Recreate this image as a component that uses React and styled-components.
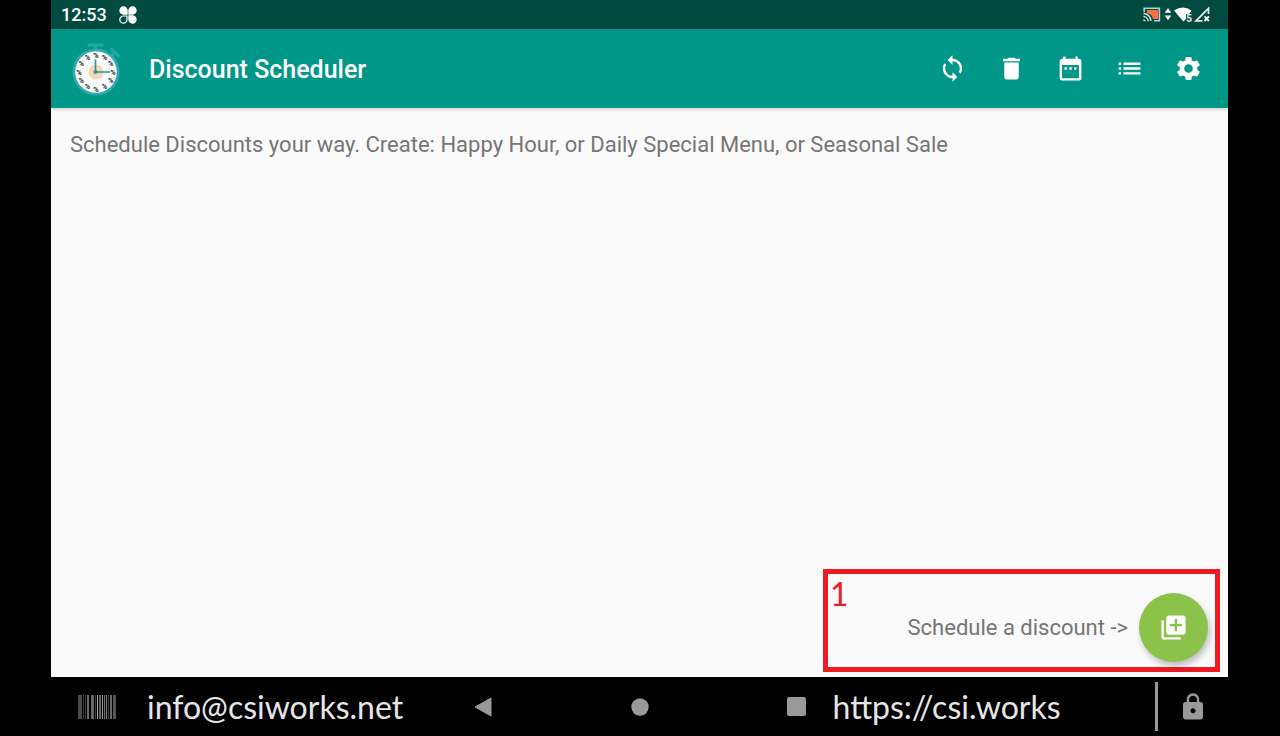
import React from "react";
import styled, { createGlobalStyle } from "styled-components";
import {
  MdDateRange,
  MdDelete,
  MdLibraryAdd,
  MdList,
  MdLock,
  MdSettings,
  MdSync,
} from "react-icons/md";

const actions = [
  { label: "Sync", Icon: MdSync },
  { label: "Delete", Icon: MdDelete },
  { label: "Calendar", Icon: MdDateRange },
  { label: "List", Icon: MdList },
  { label: "Settings", Icon: MdSettings },
];

// hour marks around the dial of the app logo
const hours = Array.from({ length: 12 }, (_, i) => i * 30);

// x, width and shade of each barcode stripe
const stripes = [
  [0, 4, "#4a4a4a"],
  [5, 1, "#333"],
  [7, 1, "#3c3c3c"],
  [9, 2, "#6a6a6a"],
  [13, 3, "#666"],
  [17, 1, "#444"],
  [19, 1, "#aaa"],
  [21, 2, "#666"],
  [24, 1, "#999"],
  [26, 1, "#777"],
  [28, 1, "#888"],
  [30, 1, "#444"],
  [32, 2, "#6a6a6a"],
  [35, 3, "#555"],
];

const Logo = () => (
  <svg width="52" height="54" viewBox="0 0 52 54" aria-hidden="true">
    <path d="M19 3h13M25.500 3v6M41.500 7l7 7M45 10.500l-4 4" stroke="#1fa5a3" strokeWidth="3.4" strokeLinecap="round" fill="none" />
    <circle cx="26" cy="30" r="23.6" fill="#30a8ae" />
    <circle cx="26" cy="30" r="20.8" fill="#fbfdfd" />
    <circle cx="26" cy="30" r="7.6" fill="#fbd5b5" />
    {hours.map((deg) => (
      <text
        key={deg}
        x={26 + 17 * Math.sin((deg * Math.PI) / 180)}
        y={32.6 - 17 * Math.cos((deg * Math.PI) / 180)}
        textAnchor="middle"
        fontFamily="Roboto, sans-serif"
        fontSize="7.4"
        fontWeight="900"
        fill="#3c4648"
      >
        %
      </text>
    ))}
    <path d="M25.500 17.500V30H40" stroke="#1b9a98" strokeWidth="1.6" fill="none" />
    <circle cx="25.5" cy="30" r="2" fill="#1b9a98" />
  </svg>
);

const Clover = () => (
  <svg width="18" height="18" viewBox="0 0 18 18" fill="#fff" aria-hidden="true">
    <path d="M8.700 8.700H4.700a4.200 4.200 0 1 1 4-4z" />
    <path d="M9.300 8.700h4a4.200 4.200 0 1 0-4-4z" />
    <path d="M9.300 9.300h4a4.200 4.200 0 1 1-4 4z" />
    <path d="M8 10H4.600a3.600 3.600 0 1 0 3.400 3.600z" fill="none" stroke="#fff" strokeWidth="1.2" />
  </svg>
);

const StatusIcons = () => (
  <svg width="68" height="18" viewBox="0 0 68 18" aria-hidden="true">
    <path d="M4 4h11v9h-5Q9 8 4 7z" fill="#ff6e40" />
    <path d="M1.200 6V2.200h15.200v12.600H11" fill="none" stroke="#b9d2cf" strokeWidth="1.600" />
    <path d="M.5 7.600a7.400 7.400 0 0 1 7.400 7.400M.5 10.600a4.600 4.600 0 0 1 4.600 4.600" fill="none" stroke="#d6e4e2" strokeWidth="1.500" />
    <path d="M.5 13.200a2 2 0 0 1 2 2h-2z" fill="#e4efed" />
    <path d="M25 2l3.200 4.800h-6.400zM25 14.200l3.200-4.800h-6.400z" fill="#fff" />
    <path d="M31 4.600q9-6 17.600 0L46 8h-3v5l-2.600 2.600z" fill="#fff" />
    <text x="43.2" y="16" fontFamily="Roboto, sans-serif" fontSize="10" fontWeight="700" fill="#e4efed">
      5
    </text>
    <path d="M65.500 8V2.400L53 14.800h6.500" fill="none" stroke="#e4efed" strokeWidth="1.700" />
    <path d="M61.500 10.400l4.400 4.600m0-4.600l-4.400 4.600" stroke="#f4faf9" strokeWidth="1.900" />
  </svg>
);

const Barcode = () => (
  <svg width="38" height="24" viewBox="0 0 38 24" shapeRendering="crispEdges" aria-hidden="true">
    {stripes.map(([x, width, fill]) => (
      <rect key={x} x={x} y="0" width={width} height="24" fill={fill} />
    ))}
  </svg>
);

const App = () => {
  return (
    <>
      <GlobalStyle />
      <Screen>
        <StatusBar>
          <Time>12:53</Time>
          <Clover />
          <Spacer />
          <StatusIcons />
        </StatusBar>
        <AppBar>
          <Logo />
          <Title>Discount Scheduler</Title>
          <Spacer />
          {actions.map(({ label, Icon }) => (
            <ActionButton key={label} type="button" aria-label={label}>
              <Icon size={29} />
            </ActionButton>
          ))}
        </AppBar>
        <Content>
          <Text>
            Schedule Discounts your way. Create: Happy Hour, or Daily Special
            Menu, or Seasonal Sale
          </Text>
          <Callout>
            <Step>1</Step>
            <Text>Schedule a discount -&gt;</Text>
            <AddButton type="button" aria-label="Schedule a discount">
              <MdLibraryAdd size={29} />
            </AddButton>
          </Callout>
        </Content>
        <NavBar>
          <NavSide>
            <NavButton type="button" aria-label="Scan">
              <Barcode />
            </NavButton>
            <ContactLink href="mailto:info@csiworks.net">
              info@csiworks.net
            </ContactLink>
            <Spacer />
            <NavButton type="button" aria-label="Back">
              <svg width="18" height="20" viewBox="0 0 18 20">
                <path d="M1 10L17 1v18z" fill="#999" stroke="#999" strokeLinejoin="round" />
              </svg>
            </NavButton>
          </NavSide>
          <NavButton type="button" aria-label="Home">
            <svg width="18" height="18" viewBox="0 0 18 18">
              <circle cx="9" cy="9" r="8.7" fill="#999" />
            </svg>
          </NavButton>
          <NavSide $end>
            <NavButton type="button" aria-label="Recent apps">
              <svg width="19" height="19" viewBox="0 0 19 19">
                <rect width="19" height="19" rx="2" fill="#999" />
              </svg>
            </NavButton>
            <ContactLink href="https://csi.works">https://csi.works</ContactLink>
            <Spacer />
            <Divider />
            <NavButton type="button" aria-label="Lock">
              <MdLock size={30} />
            </NavButton>
          </NavSide>
        </NavBar>
      </Screen>
    </>
  );
};

const GlobalStyle = createGlobalStyle`
  * {
    box-sizing: border-box;
  }
  body {
    margin: 0;
    background: #000;
    font-family: Roboto, sans-serif;
  }
  button {
    display: flex;
    align-items: center;
    justify-content: center;
    padding: 0;
    border: none;
    background: transparent;
    cursor: pointer;
  }
  svg {
    display: block;
    flex-shrink: 0;
  }
`;

const Screen = styled.div`
  display: flex;
  flex-direction: column;
  min-height: 100vh;
  margin: 0 52px 0 51px;
`;

const Spacer = styled.div`
  flex: 1;
`;

const StatusBar = styled.div`
  display: flex;
  align-items: center;
  height: 29px;
  padding: 0 17px 0 10px;
  background: #004a40;
`;

const Time = styled.span`
  margin-right: 12px;
  font-size: 18px;
  font-weight: 500;
  color: #fff;
`;

const AppBar = styled.header`
  position: relative;
  display: flex;
  align-items: center;
  height: 79px;
  padding: 0 10px 0 19px;
  background: #009688;
  box-shadow: 0 1px 4px rgba(0, 0, 0, 0.2);
`;

const Title = styled.h1`
  margin: 0 0 0 27px;
  padding-top: 2px;
  font-size: 25px;
  font-weight: 500;
  line-height: 30px;
  color: #fff;
`;

const ActionButton = styled.button`
  width: 59px;
  height: 59px;
  color: #fff;
`;

const Content = styled.main`
  flex: 1;
  display: flex;
  flex-direction: column;
  justify-content: space-between;
  padding: 20px 8px 5px 19px;
  background: #fafafa;
`;

const Text = styled.p`
  margin: 0;
  padding-top: 2px;
  font-size: 22px;
  line-height: 30px;
  color: #757575;
`;

const Callout = styled.section`
  position: relative;
  align-self: flex-end;
  display: flex;
  align-items: center;
  justify-content: flex-end;
  gap: 11px;
  width: 397px;
  max-width: 100%;
  height: 103px;
  padding: 13px 7px 0 0;
  border: 5px solid #ed1c24;
`;

const Step = styled.span`
  position: absolute;
  top: 0;
  left: 2px;
  font-family: Lato, sans-serif;
  font-size: 32px;
  line-height: 40px;
  color: #ed1c24;
`;

const AddButton = styled.button`
  width: 69px;
  height: 69px;
  border-radius: 50%;
  background: #8bc34a;
  box-shadow: 2px 4px 6px rgba(0, 0, 0, 0.25);
  color: #fff;
`;

const NavBar = styled.nav`
  display: grid;
  grid-template-columns: 1fr auto 1fr;
  align-items: center;
  height: 59px;
  background: #000;
`;

const NavSide = styled.div`
  display: flex;
  align-items: center;
  padding: ${({ $end }) => ($end ? "0 20px 0 138px" : "0 139px 0 27px")};
`;

const NavButton = styled.button`
  color: #999;
`;

const ContactLink = styled.a`
  margin-left: ${({ href }) => (href.startsWith("mailto") ? "31px" : "27px")};
  font-family: Lato, sans-serif;
  font-size: 32px;
  line-height: 40px;
  color: #e6e6e6;
  text-decoration: none;
`;

const Divider = styled.div`
  width: 3px;
  height: 49px;
  margin-right: 20px;
  background: #999;
`;

export default App;
